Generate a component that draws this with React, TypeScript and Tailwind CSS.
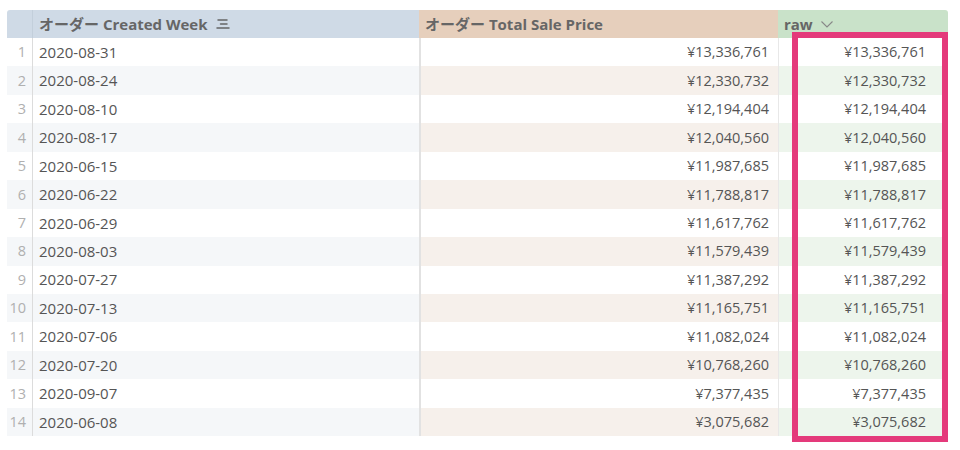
import React from 'react';

interface Row {
  week: string;
  price: string;
}

const rows: Row[] = [
  { week: '2020-08-31', price: '¥13,336,761' },
  { week: '2020-08-24', price: '¥12,330,732' },
  { week: '2020-08-10', price: '¥12,194,404' },
  { week: '2020-08-17', price: '¥12,040,560' },
  { week: '2020-06-15', price: '¥11,987,685' },
  { week: '2020-06-22', price: '¥11,788,817' },
  { week: '2020-06-29', price: '¥11,617,762' },
  { week: '2020-08-03', price: '¥11,579,439' },
  { week: '2020-07-27', price: '¥11,387,292' },
  { week: '2020-07-13', price: '¥11,165,751' },
  { week: '2020-07-06', price: '¥11,082,024' },
  { week: '2020-07-20', price: '¥10,768,260' },
  { week: '2020-09-07', price: '¥7,377,435' },
  { week: '2020-06-08', price: '¥3,075,682' },
];

const SortIcon: React.FC = () => (
  <svg width="14" height="12" viewBox="0 0 14 12" className="ml-[9px] text-[#666]">
    <path d="M2 2h9M4.5 6h6.5M1 10h12" stroke="currentColor" strokeWidth="1.5" strokeLinecap="round" fill="none" />
  </svg>
);

const Chevron: React.FC = () => (
  <svg width="14" height="10" viewBox="0 0 14 10" className="ml-[7px] text-[#888]">
    <path d="M1.5 2.5 7 8l5.5-5.5" stroke="currentColor" strokeWidth="1.1" fill="none" />
  </svg>
);

const App: React.FC = () => {
  return (
    <div className="w-[960px] h-[450px] bg-white pt-[10px] pl-[7px] text-[14.5px] text-[#555]" style={{ fontFamily: '"Open Sans", "Noto Sans CJK JP", sans-serif' }}>
      <div className="relative w-[941px]">
        <div className="flex h-[28px] rounded-t-[3px] overflow-hidden font-bold text-[15px] text-[#666]">
          <div className="w-[26px] bg-[#cfdae6] border-r border-[#c3cfdb]" />
          <div className="w-[386px] bg-[#cfdae6] flex items-center pl-[6px]">
            <span>オーダー Created Week</span>
            <SortIcon />
          </div>
          <div className="w-[359px] bg-[#e6cfbc] flex items-center pl-[6px]">オーダー Total Sale Price</div>
          <div className="w-[170px] bg-[#c9e2c9] flex items-center pl-[6px]">
            <span>raw</span>
            <Chevron />
          </div>
        </div>
        {rows.map((r, i) => {
          const even = i % 2 === 1;
          return (
            <div key={r.week} className="flex h-[28.45px] items-center">
              <div className={`w-[26px] h-full flex items-center justify-end pr-[6px] text-[#b0b0b0] border-r border-[#dcdcdc] ${even ? 'bg-[#f5f7f9]' : 'bg-white'}`}>{i + 1}</div>
              <div className={`w-[386px] h-full flex items-center pl-[6px] text-[15px] ${even ? 'bg-[#f5f7f9]' : 'bg-white'}`}>{r.week}</div>
              <div className={`w-[359px] h-full flex items-center justify-end pr-[9px] border-l-2 border-[#e2e2e2] ${even ? 'bg-[#f6f0eb]' : 'bg-white'}`}>{r.price}</div>
              <div className={`w-[170px] h-full flex items-center justify-end pr-[22px] border-l border-[#e8e8e8] ${even ? 'bg-[#edf5ec]' : 'bg-white'}`}>{r.price}</div>
            </div>
          );
        })}
        <div className="absolute left-[785px] top-[22px] w-[156px] h-[410px] border-[6px] border-[#e43a7b] pointer-events-none" />
      </div>
    </div>
  );
};

export default App;
